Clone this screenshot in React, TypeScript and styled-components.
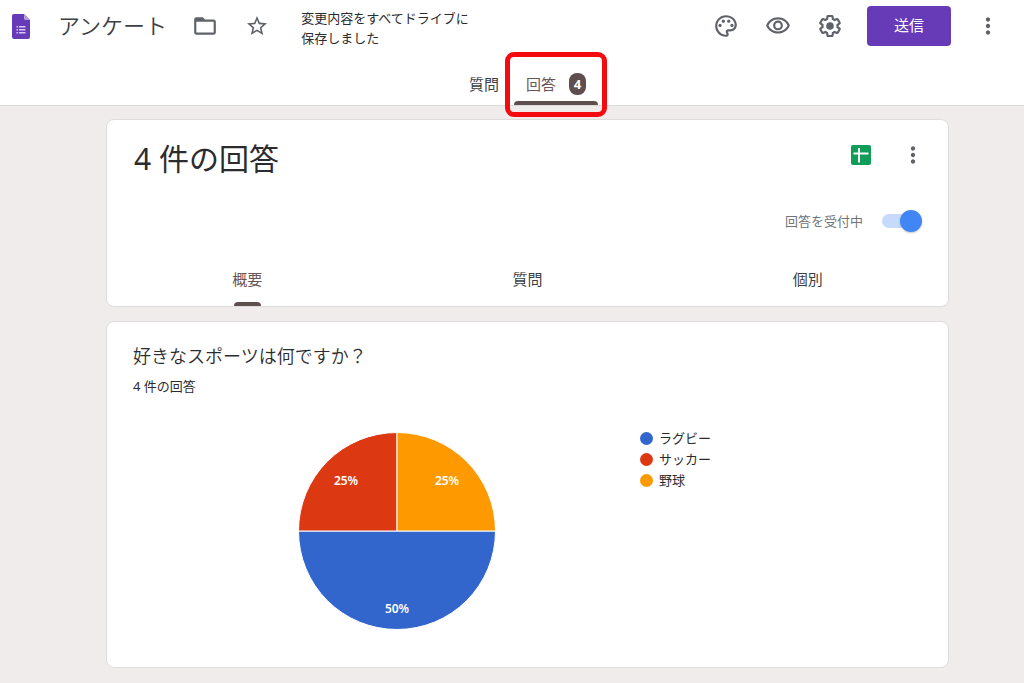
import React from "react";
import styled, { createGlobalStyle } from "styled-components";
import {
  MdFolderOpen,
  MdMoreVert,
  MdOutlinePalette,
  MdOutlineVisibility,
  MdStarBorder,
} from "react-icons/md";

const GlobalStyle = createGlobalStyle`
  * { box-sizing: border-box; }
  body {
    margin: 0;
    background: #f0eceb;
    color: #2b2c2f;
    font-family: "Noto Sans", "Noto Sans CJK JP", sans-serif;
  }
  button, input { font-family: inherit; }
`;

const Header = styled.header`
  background: #fff;
  border-bottom: 1px solid #dcd9d9;
`;

const Toolbar = styled.div`
  display: flex;
  align-items: center;
  height: 52px;
  padding: 0 16px 0 12px;
`;

const FormTitle = styled.h1`
  margin: 0 18px 2px 28px;
  font-size: 22px;
  line-height: 32px;
  font-weight: 350;
  color: #3c4043;
  white-space: nowrap;
`;

const IconGroup = styled.div`
  display: flex;
  align-items: center;
  gap: 12px;
`;

const IconButton = styled.button`
  display: flex;
  align-items: center;
  justify-content: center;
  width: 40px;
  height: 40px;
  padding: 0;
  border: 0;
  border-radius: 50%;
  background: none;
  color: #5f6368;
  cursor: pointer;
`;

const SaveStatus = styled.p`
  width: 176px;
  margin: 4px 0 0 24px;
  font-size: 13px;
  line-height: 20px;
  font-weight: 400;
`;

const ToolbarActions = styled(IconGroup)`
  margin-left: auto;
`;

const SendButton = styled.button`
  width: 84px;
  height: 40px;
  margin: 0 5px;
  padding: 0 0 2px;
  border: 0;
  border-radius: 4px;
  background: #673ab7;
  color: #fff;
  font-size: 15px;
  line-height: 20px;
  cursor: pointer;
`;

const FormTabs = styled.nav`
  display: flex;
  justify-content: center;
  gap: 3px;
  padding: 0 75px 0 106px;
`;

const FormTab = styled.button<{ $active?: boolean }>`
  position: relative;
  display: flex;
  align-items: center;
  gap: 13px;
  height: 53px;
  padding: 10px 12px 0;
  border: 0;
  background: none;
  color: ${(p) => (p.$active ? "#6b5656" : "#3c4043")};
  font-size: 15px;
  line-height: 20px;
  cursor: pointer;
  &::after {
    content: "";
    display: ${(p) => (p.$active ? "block" : "none")};
    position: absolute;
    left: 0;
    right: 0;
    bottom: 0;
    height: 4px;
    border-radius: 4px 4px 0 0;
    background: #5f4e4e;
  }
`;

const Badge = styled.span`
  display: flex;
  align-items: center;
  justify-content: center;
  width: 17px;
  height: 22px;
  border-radius: 8px;
  background: #5f4e4e;
  color: #fff;
  font-size: 13px;
  font-weight: 700;
`;

const Highlight = styled.span`
  position: absolute;
  z-index: 1;
  inset: 0 -9px -12px;
  border: 5px solid #f40b0f;
  border-radius: 9px;
  pointer-events: none;
`;

const Content = styled.main`
  display: flex;
  flex-direction: column;
  gap: 14px;
  padding: 13px 75px 15px 106px;
`;

const Card = styled.section`
  border: 1px solid #dfdcdd;
  border-radius: 8px;
  background: #fff;
`;

const SummaryHead = styled.div`
  display: flex;
  justify-content: space-between;
  align-items: flex-start;
  padding: 15px 15px 0 27px;
`;

const SummaryTitle = styled.h2`
  margin: 4px 0 0;
  font-size: 30px;
  line-height: 40px;
  font-weight: 400;
`;

const AcceptRow = styled.label`
  display: flex;
  align-items: center;
  justify-content: flex-end;
  gap: 19px;
  height: 24px;
  margin-top: 30px;
  padding-right: 26px;
  color: #70757a;
  font-size: 13px;
  line-height: 20px;
`;

const Switch = styled.input`
  appearance: none;
  position: relative;
  width: 40px;
  height: 22px;
  margin: 0;
  cursor: pointer;
  &::before {
    content: "";
    position: absolute;
    inset: 4px 4px 4px 0;
    border-radius: 8px;
    background: #c6dafc;
  }
  &::after {
    content: "";
    position: absolute;
    right: 0;
    top: 0;
    width: 22px;
    height: 22px;
    border-radius: 50%;
    background: #4285f4;
    box-shadow: 0 1px 2px rgba(60, 64, 67, 0.3);
  }
`;

const ViewTabs = styled.nav`
  display: grid;
  grid-template-columns: repeat(3, 1fr);
  margin-top: 20px;
`;

const ViewTab = styled.button<{ $active?: boolean }>`
  display: flex;
  flex-direction: column;
  align-items: center;
  justify-content: space-between;
  height: 53px;
  padding: 16px 0 0;
  border: 0;
  background: none;
  color: ${(p) => (p.$active ? "#6b5656" : "#3c4043")};
  font-size: 15px;
  line-height: 20px;
  cursor: pointer;
  &::after {
    content: "";
    width: 27px;
    height: 4px;
    border-radius: 4px 4px 0 0;
    background: ${(p) => (p.$active ? "#5f4e4e" : "transparent")};
  }
`;

const QuestionCard = styled(Card)`
  padding: 22px 26px 37px;
`;

const QuestionTitle = styled.h3`
  margin: 0;
  font-size: 18px;
  line-height: 24px;
  font-weight: 350;
`;

const ResponseCount = styled.p`
  margin: 8px 0 0;
  font-size: 13px;
  line-height: 20px;
  font-weight: 400;
`;

const ChartArea = styled.div`
  display: flex;
  align-items: flex-start;
  gap: 144px;
  margin-top: 36px;
  padding-left: 165px;
`;

const Pie = styled.svg`
  flex: none;
  text {
    fill: #fff;
    font-family: "Noto Sans", sans-serif;
    font-size: 12px;
    font-weight: 600;
    text-anchor: middle;
  }
`;

const Legend = styled.ul`
  margin: -4px 0 0;
  padding: 0;
  list-style: none;
`;

const LegendItem = styled.li<{ $color: string }>`
  display: flex;
  align-items: center;
  gap: 6px;
  font-size: 13px;
  line-height: 21px;
  white-space: nowrap;
  &::before {
    content: "";
    width: 13px;
    height: 13px;
    border-radius: 50%;
    background: ${(p) => p.$color};
  }
`;

const FormsLogo = () => (
  <svg width="18" height="25" viewBox="0 0 18 25" aria-hidden="true">
    <path d="M2 0h10l6 6v17a2 2 0 0 1-2 2H2a2 2 0 0 1-2-2V2a2 2 0 0 1 2-2z" fill="#673ab7" />
    <path d="M12 0l6 6h-4.500a1.500 1.500 0 0 1-1.500-1.500z" fill="#b39ddb" />
    <path d="M4.500 12h1.500v1.500H4.500zM7 12h6.500v1.500H7zM4.500 15h1.500v1.500H4.500zM7 15h6.500v1.500H7zM4.500 18h1.500v1.500H4.500zM7 18h6.500v1.500H7z" fill="#d6c8ee" />
  </svg>
);

const GearIcon = () => (
  <svg width="26" height="26" viewBox="0 0 24 24" fill="currentColor" aria-hidden="true">
    <path d="M13.85 22.25h-3.7c-.74 0-1.36-.54-1.45-1.27l-.27-1.89c-.27-.14-.53-.29-.79-.46l-1.8.72c-.7.26-1.47-.03-1.81-.65L2.200 15.530c-.35-.66-.2-1.44.36-1.88l1.53-1.19c-.01-.15-.02-.3-.02-.46 0-.15.01-.31.02-.46l-1.52-1.19c-.59-.45-.74-1.26-.37-1.88l1.85-3.19c.34-.62 1.11-.9 1.79-.63l1.81.73c.26-.17.52-.32.78-.46l.27-1.910c.09-.7.71-1.25 1.44-1.25h3.7c.74 0 1.36.54 1.45 1.27l.27 1.89c.27.14.53.29.79.46l1.8-.72c.71-.26 1.48.03 1.82.65l1.84 3.18c.36.66.2 1.44-.36 1.88l-1.52 1.19c.01.15.02.3.02.46s-.01.31-.02.46l1.52 1.19c.56.45.72 1.23.37 1.86l-1.860 3.220c-.34.62-1.11.9-1.8.63l-1.8-.72c-.26.17-.52.32-.78.46l-.27 1.910c-.1.680-.72 1.220-1.460 1.220zm-3.230-2h2.760l.37-2.550.53-.22c.44-.18.88-.44 1.34-.78l.45-.34 2.380.96 1.380-2.400-2.030-1.580.07-.56c.03-.26.06-.51.06-.78s-.03-.53-.06-.78l-.07-.56 2.030-1.580-1.390-2.400-2.390.96-.45-.35c-.42-.32-.87-.58-1.330-.77l-.52-.22-.37-2.550h-2.760l-.37 2.550-.53.21c-.44.19-.88.44-1.340.79l-.45.33-2.380-.95-1.390 2.390 2.030 1.580-.07.56a7 7 0 0 0-.06.79c0 .26.02.53.06.78l.07.56-2.030 1.580 1.380 2.400 2.390-.96.45.35c.43.33.86.58 1.330.77l.53.22.38 2.550z" />
    <circle cx="12" cy="12" r="3.500" />
  </svg>
);

const SheetsIcon = () => (
  <svg width="20" height="20" viewBox="0 0 20 20" aria-hidden="true">
    <rect width="20" height="20" rx="2" fill="#0f9d58" />
    <path d="M2.500 8.500h15M8 3v14.500" stroke="#fff" strokeWidth="2" />
  </svg>
);

const LEGEND = [
  { label: "ラグビー", color: "#3366cc" },
  { label: "サッカー", color: "#dc3912" },
  { label: "野球", color: "#ff9900" },
];

export default function App() {
  return (
    <>
      <GlobalStyle />
      <Header>
        <Toolbar>
          <FormsLogo />
          <FormTitle>アンケート</FormTitle>
          <IconGroup>
            <IconButton aria-label="フォルダに移動"><MdFolderOpen size={26} /></IconButton>
            <IconButton aria-label="スターを付ける"><MdStarBorder size={24} /></IconButton>
          </IconGroup>
          <SaveStatus>変更内容をすべてドライブに保存しました</SaveStatus>
          <ToolbarActions>
            <IconButton aria-label="テーマをカスタマイズ"><MdOutlinePalette size={26} /></IconButton>
            <IconButton aria-label="プレビュー"><MdOutlineVisibility size={26} /></IconButton>
            <IconButton aria-label="設定"><GearIcon /></IconButton>
            <SendButton>送信</SendButton>
            <IconButton aria-label="その他"><MdMoreVert size={26} /></IconButton>
          </ToolbarActions>
        </Toolbar>
        <FormTabs>
          <FormTab>質問</FormTab>
          <FormTab $active>
            回答
            <Badge>4</Badge>
            <Highlight />
          </FormTab>
        </FormTabs>
      </Header>
      <Content>
        <Card>
          <SummaryHead>
            <SummaryTitle>4 件の回答</SummaryTitle>
            <IconGroup>
              <IconButton aria-label="スプレッドシートの作成"><SheetsIcon /></IconButton>
              <IconButton aria-label="回答のオプション"><MdMoreVert size={26} /></IconButton>
            </IconGroup>
          </SummaryHead>
          <AcceptRow>
            回答を受付中
            <Switch type="checkbox" role="switch" defaultChecked />
          </AcceptRow>
          <ViewTabs>
            <ViewTab $active>概要</ViewTab>
            <ViewTab>質問</ViewTab>
            <ViewTab>個別</ViewTab>
          </ViewTabs>
        </Card>
        <QuestionCard>
          <QuestionTitle>好きなスポーツは何ですか？</QuestionTitle>
          <ResponseCount>4 件の回答</ResponseCount>
          <ChartArea>
            <Pie width="198" height="198" viewBox="0 0 198 198" role="img" aria-label="回答の円グラフ">
              <g stroke="#fff" strokeWidth="1">
                <path d="M99 99H197.500A98.500 98.500 0 0 1 0.500 99z" fill="#3366cc" />
                <path d="M99 99H0.500A98.500 98.500 0 0 1 99 0.500z" fill="#dc3912" />
                <path d="M99 99V0.500A98.500 98.500 0 0 1 197.500 99z" fill="#ff9900" />
              </g>
              <text x="48" y="53">25%</text>
              <text x="149" y="53">25%</text>
              <text x="99" y="181">50%</text>
            </Pie>
            <Legend>
              {LEGEND.map((item) => (
                <LegendItem key={item.label} $color={item.color}>{item.label}</LegendItem>
              ))}
            </Legend>
          </ChartArea>
        </QuestionCard>
      </Content>
    </>
  );
}
